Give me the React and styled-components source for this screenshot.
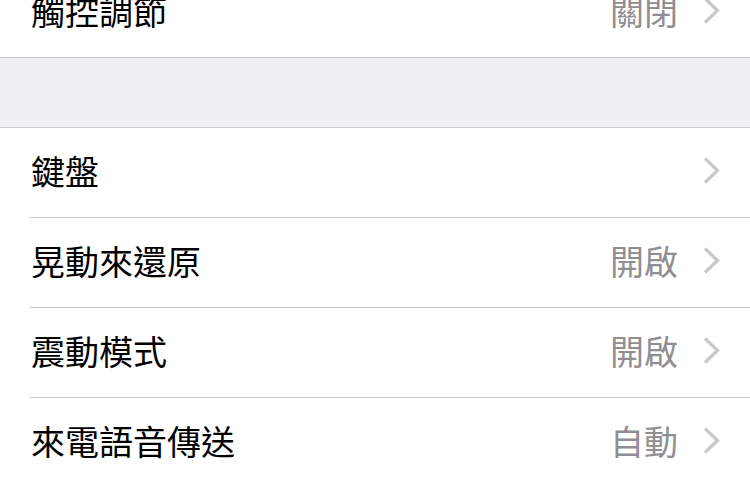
import React from "react";
import styled, { createGlobalStyle } from "styled-components";

const Global = createGlobalStyle`
  html, body { margin: 0; padding: 0; background: #efeff4; }
  body { font-family: "Noto Sans CJK TC", "Noto Sans", sans-serif; overflow: hidden; }
`;

const Page = styled.div`
  width: 750px;
  height: 480px;
  overflow: hidden;
  background: #efeff4;
`;

const Scroll = styled.div`
  margin-top: -33px;
  display: flex;
  flex-direction: column;
`;

const Group = styled.section`
  background: #fff;
  border-top: 1px solid #c8c7cc;
  border-bottom: 1px solid #c8c7cc;
  display: flex;
  flex-direction: column;
`;

const Spacer = styled.div`
  height: ${(p) => p.$h}px;
`;

const Row = styled.div`
  display: flex;
  padding-left: 30px;
  &:last-child > div { border-bottom: none; }
`;

const Inner = styled.div`
  flex: 1;
  height: 85px;
  padding-bottom: 4px;
  display: flex;
  align-items: center;
  padding-right: 30px;
  border-bottom: 1px solid #c8c7cc;
`;

const Label = styled.span`
  flex: 1;
  font-size: 34px;
  color: #000;
  line-height: 1;
  padding-left: 1px;
`;

const Value = styled.span`
  font-size: 34px;
  color: #8e8e93;
  line-height: 1;
  margin-right: 25px;
`;

const Chevron = () => (
  <svg width="17" height="27" viewBox="0 0 17 27" fill="none">
    <polyline points="2,1.5 14.5,13.5 2,25.5" stroke="#c7c7cc" strokeWidth="3.2" />
  </svg>
);

const Cell = ({ label, value }) => (
  <Row>
    <Inner>
      <Label>{label}</Label>
      {value && <Value>{value}</Value>}
      <Chevron />
    </Inner>
  </Row>
);

export default function App() {
  return (
    <Page>
      <Global />
      <Scroll>
        <Group>
          <Cell label="觸控調節" value="關閉" />
        </Group>
        <Spacer $h={69} />
        <Group>
          <Cell label="鍵盤" />
          <Cell label="晃動來還原" value="開啟" />
          <Cell label="震動模式" value="開啟" />
          <Cell label="來電語音傳送" value="自動" />
        </Group>
      </Scroll>
    </Page>
  );
}
